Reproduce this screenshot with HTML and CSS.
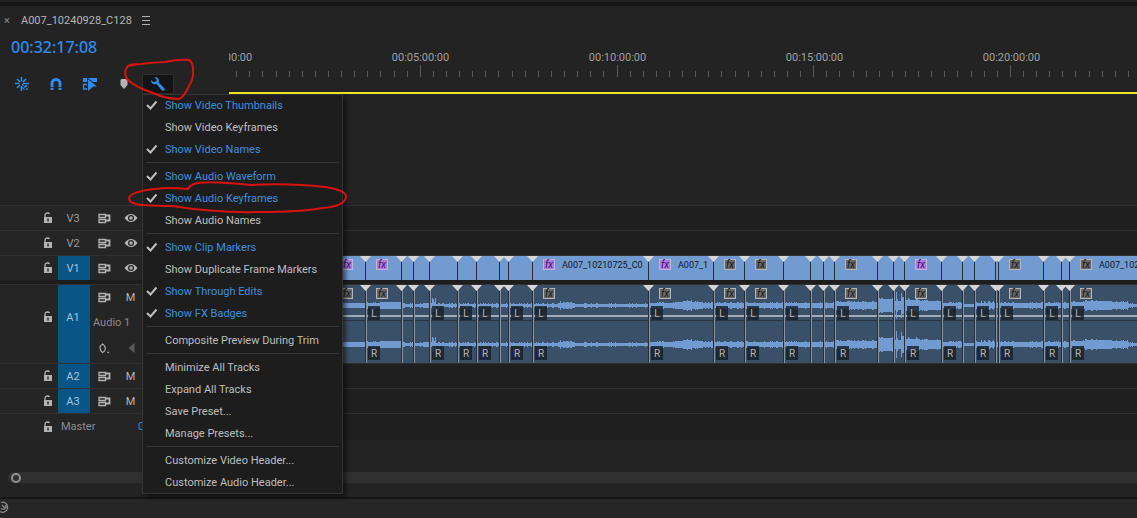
FILE: index.html
```html
<!DOCTYPE html>
<html lang="en">

<head>
    <meta charset="UTF-8">
    <meta name="viewport" content="width=device-width, initial-scale=1.0">
    <title>Timeline - A007_10240928_C128</title>
    <link rel="stylesheet" href="styles.css">
</head>

<body>
    <!-- Shared icons -->
    <svg class="sprite" aria-hidden="true">
        <symbol id="lock" viewBox="0 0 10 12">
            <path d="M2 5.500V3.500Q2 1 4.500 1Q6 1 6.500 2" fill="none" stroke="currentColor" stroke-width="1.300" />
            <path fill-rule="evenodd" fill="currentColor" d="M1 5H9V11H1ZM4.300 6.500V9.500H5.700V6.500Z" />
        </symbol>
        <symbol id="sync" viewBox="0 0 13 11">
            <path d="M1 1.500H7.500V4.500H1ZM1 6.500H7.500V9.500H1Z" fill="none" stroke="currentColor" stroke-width="1.300" />
            <path d="M7.500 2.500H11.500V7.500H7.500" fill="none" stroke="currentColor" stroke-width="1.800" />
        </symbol>
        <symbol id="eye" viewBox="0 0 14 10">
            <path fill-rule="evenodd" fill="currentColor" d="M.5 5Q3.500 1 7 1T13.500 5Q10.500 9 7 9T.5 5ZM7 2A3 3 0 1 0 7 8A3 3 0 1 0 7 2Z" />
            <circle cx="7" cy="5" r="1.700" fill="currentColor" />
        </symbol>
        <symbol id="check" viewBox="0 0 12 10">
            <path d="M1 5L4.500 8.500L10.500 1.500" fill="none" stroke="currentColor" stroke-width="2" />
        </symbol>
    </svg>

    <div class="top-edge"></div>
    <div class="tab-bar">
        <button class="close" aria-label="Close">×</button>
        <span class="tab-name">A007_10240928_C128</span>
        <button class="panel-menu" aria-label="Panel menu"><svg width="8" height="9"><path d="M0 .5H8M0 4.500H8M0 8.500H8" stroke="currentColor" /></svg></button>
    </div>

    <div class="timeline-head">
        <div class="controls">
            <div class="timecode">00:32:17:08</div>
            <div class="tools">
                <button class="tool" aria-label="Nest sequences">
                    <svg width="16" height="16" viewBox="0 0 16 16"><path d="M1 7.500H5.500M9 7.500H15M7.500 1V5.500M7.500 10V15M3 3L6 6M12 3L9 6M3 12L6 9" stroke="currentColor" stroke-width="1.600" /><path d="M8 8L14 14M8.500 11.500L11 14M11.500 9.500L14.500 11" stroke="currentColor" stroke-width="1.500" stroke-dasharray="2 1" /></svg>
                </button>
                <button class="tool" aria-label="Snap">
                    <svg width="14" height="14" viewBox="0 0 14 14"><path d="M3 13V6.500A4 4 0 0 1 11 6.500V13" fill="none" stroke="currentColor" stroke-width="3" /><path d="M1 10.500H5M9 10.500H13" stroke="#232323" stroke-width=".8" /></svg>
                </button>
                <button class="tool" aria-label="Linked selection">
                    <svg width="16" height="16" viewBox="0 0 16 16"><path fill="currentColor" d="M1 2H5V6H1ZM6 2H15V6H11L6 2ZM6 3L15 10.500H11.500L6 15Z" /><path d="M5 8.500H1.500V13H5" fill="none" stroke="currentColor" stroke-width="1.300" /></svg>
                </button>
                <button class="tool marker" aria-label="Add marker">
                    <svg width="8" height="10" viewBox="0 0 8 10"><path fill="currentColor" d="M1.500 0H6.500L7.500 1V6L4 10L.5 6V1Z" /></svg>
                </button>
                <div class="settings">
                    <button class="wrench" aria-label="Timeline display settings" aria-expanded="true">
                        <svg width="16" height="16" viewBox="0 0 16 16"><path fill="currentColor" d="M4.300 1L6.500 3.200V5L5 6L3 5.800L1 4Q.8 7.500 4 8.300Q5.500 8.500 6.500 8L12 14.500Q14 15.300 14.800 13.800Q15 13 14 12L8.800 6.500Q9.500 4 7.800 2Q6 .6 4.300 1Z" /></svg>
                    </button>
                    <div class="menu" role="menu">
                        <button class="item on" role="menuitemcheckbox" aria-checked="true"><svg class="tick"><use href="#check" /></svg>Show Video Thumbnails</button>
                        <button class="item" role="menuitemcheckbox" aria-checked="false">Show Video Keyframes</button>
                        <button class="item on" role="menuitemcheckbox" aria-checked="true"><svg class="tick"><use href="#check" /></svg>Show Video Names</button>
                        <hr>
                        <button class="item on" role="menuitemcheckbox" aria-checked="true"><svg class="tick"><use href="#check" /></svg>Show Audio Waveform</button>
                        <button class="item on" role="menuitemcheckbox" aria-checked="true"><svg class="tick"><use href="#check" /></svg>Show Audio Keyframes</button>
                        <button class="item" role="menuitemcheckbox" aria-checked="false">Show Audio Names</button>
                        <hr>
                        <button class="item on" role="menuitemcheckbox" aria-checked="true"><svg class="tick"><use href="#check" /></svg>Show Clip Markers</button>
                        <button class="item" role="menuitemcheckbox" aria-checked="false">Show Duplicate Frame Markers</button>
                        <button class="item on" role="menuitemcheckbox" aria-checked="true"><svg class="tick"><use href="#check" /></svg>Show Through Edits</button>
                        <button class="item on" role="menuitemcheckbox" aria-checked="true"><svg class="tick"><use href="#check" /></svg>Show FX Badges</button>
                        <hr>
                        <button class="item" role="menuitem">Composite Preview During Trim</button>
                        <hr>
                        <button class="item" role="menuitem">Minimize All Tracks</button>
                        <button class="item" role="menuitem">Expand All Tracks</button>
                        <button class="item" role="menuitem">Save Preset...</button>
                        <button class="item" role="menuitem">Manage Presets...</button>
                        <hr>
                        <button class="item" role="menuitem">Customize Video Header...</button>
                        <button class="item" role="menuitem">Customize Audio Header...</button>
                    </div>
                </div>
            </div>
        </div>
        <div class="ruler">
            <div class="ruler-labels">
                <span>00:00:00:00</span>
                <span>00:05:00:00</span>
                <span>00:10:00:00</span>
                <span>00:15:00:00</span>
                <span>00:20:00:00</span>
            </div>
            <svg class="ticks"><path id="minor" /><path id="major" /></svg>
            <div class="work-area"></div>
        </div>
    </div>

    <div class="tracks">
        <div class="track">
            <div class="head">
                <button class="lock" aria-label="Lock V3"><svg><use href="#lock" /></svg></button>
                <button class="target">V3</button>
                <button class="sync" aria-label="Sync lock V3"><svg><use href="#sync" /></svg></button>
                <button class="output" aria-label="Toggle V3 output"><svg><use href="#eye" /></svg></button>
            </div>
            <div class="lane"></div>
        </div>
        <div class="track">
            <div class="head">
                <button class="lock" aria-label="Lock V2"><svg><use href="#lock" /></svg></button>
                <button class="target">V2</button>
                <button class="sync" aria-label="Sync lock V2"><svg><use href="#sync" /></svg></button>
                <button class="output" aria-label="Toggle V2 output"><svg><use href="#eye" /></svg></button>
            </div>
            <div class="lane"></div>
        </div>
        <div class="track">
            <div class="head">
                <button class="lock" aria-label="Lock V1"><svg><use href="#lock" /></svg></button>
                <button class="target active">V1</button>
                <button class="sync" aria-label="Sync lock V1"><svg><use href="#sync" /></svg></button>
                <button class="output" aria-label="Toggle V1 output"><svg><use href="#eye" /></svg></button>
            </div>
            <div class="lane"><div class="clips video" id="video-clips"></div></div>
        </div>
        <div class="divider"></div>
        <div class="track tall">
            <div class="head">
                <button class="lock" aria-label="Lock A1"><svg><use href="#lock" /></svg></button>
                <button class="target active">A1</button>
                <div class="track-options">
                    <button class="sync" aria-label="Sync lock A1"><svg><use href="#sync" /></svg></button>
                    <button class="output">M</button>
                    <span class="track-name">Audio 1</span>
                    <button class="sync" aria-label="Show keyframes"><svg viewBox="0 0 13 12"><path d="M4.500 1Q1.500 3 1.500 5.500T4.500 10.500Q7.500 8.500 7.500 6T4.500 1Z" fill="none" stroke="currentColor" stroke-width="1.200" /><path fill="currentColor" d="M9 9.500H12L10.500 11.500Z" /></svg></button>
                    <button class="output prev" aria-label="Previous keyframe"><svg viewBox="0 0 14 10"><path fill="currentColor" d="M10.500 0V10L4.500 5Z" /></svg></button>
                </div>
            </div>
            <div class="lane">
                <div class="clips audio" id="audio-clips"><svg class="wave"><path id="wave" /></svg></div>
            </div>
        </div>
        <div class="track">
            <div class="head">
                <button class="lock" aria-label="Lock A2"><svg><use href="#lock" /></svg></button>
                <button class="target active">A2</button>
                <button class="sync" aria-label="Sync lock A2"><svg><use href="#sync" /></svg></button>
                <button class="output">M</button>
            </div>
            <div class="lane"></div>
        </div>
        <div class="track">
            <div class="head">
                <button class="lock" aria-label="Lock A3"><svg><use href="#lock" /></svg></button>
                <button class="target active">A3</button>
                <button class="sync" aria-label="Sync lock A3"><svg><use href="#sync" /></svg></button>
                <button class="output">M</button>
            </div>
            <div class="lane"></div>
        </div>
        <div class="track last">
            <div class="head">
                <button class="lock" aria-label="Lock Master"><svg><use href="#lock" /></svg></button>
                <span class="master">Master</span>
                <span class="level">0.0</span>
            </div>
            <div class="lane"></div>
        </div>
    </div>

    <div class="scrollbar"><span class="handle"></span></div>
    <div class="status">
        <svg width="10" height="12" viewBox="0 0 10 12"><path d="M1 1.500A5 5 0 1 1 0 10.500M2 4L5 7M5.500 4A2.500 2.500 0 1 1 1 7" fill="none" stroke="currentColor" stroke-width="1.200" /></svg>
    </div>

    <!-- Red pen marks -->
    <svg class="marks" width="360" height="220" viewBox="0 0 360 220" aria-hidden="true">
        <path d="M128 66Q143 63 165 62Q179 59 189 60Q193 62 193 70Q194 78 189 86Q184 97 179 99Q166 99 153 93Q135 87 127 79Q123 72 128 66Q131 64 137 64" />
        <path d="M187 189Q170 187 154 189Q130 192 129 198Q129 204 142 205Q160 206 172 206Q215 213 260 212Q300 212 323 208Q346 206 346 196Q345 190 325 187Q290 183 250 185Q205 180 194 184Q189 186 187 190" />
    </svg>

    <script src="timeline.js"></script>
</body>

</html>
```
FILE: styles.css
```css
* {
    box-sizing: border-box;
}

body {
    margin: 0;
    min-height: 100vh;
    display: flex;
    flex-direction: column;
    position: relative;
    overflow-x: hidden;
    background: #232323;
    color: #b4b4b4;
    font-family: Roboto, "Noto Sans", sans-serif;
    font-size: 11px;
}

button {
    margin: 0;
    padding: 0;
    border: 0;
    background: none;
    color: inherit;
    font: inherit;
}

.sprite {
    position: absolute;
    width: 0;
    height: 0;
}

.top-edge {
    height: 6px;
    border-top: 2px solid #232323;
    background: #151515;
}

/* Tab and timecode */
.tab-bar {
    display: flex;
    align-items: center;
    gap: 10px;
    height: 28px;
    padding-left: 3px;
}

.close {
    width: 8px;
    color: #8c8c8c;
}

.panel-menu {
    display: flex;
}

.timeline-head {
    display: grid;
    grid-template-columns: 229px 1fr;
    height: 60px;
}

.timecode {
    padding-left: 11px;
    line-height: 26px;
    font-family: "Noto Sans", sans-serif;
    font-size: 16px;
    font-weight: 500;
    color: #2d8ceb;
}

.tools {
    display: flex;
    align-items: flex-end;
    height: 34px;
    padding-left: 5px;
    color: #2d8ceb;
}

.tool,
.wrench {
    display: flex;
    align-items: center;
    justify-content: center;
    width: 34px;
    height: 20px;
}

.marker {
    color: #b4b4b4;
}

.settings {
    position: relative;
}

.wrench {
    margin-left: 1px;
    width: 32px;
    border: 1px solid #303030;
    border-radius: 2px;
    background: #131313;
}

/* Display settings menu */
.menu {
    position: absolute;
    z-index: 5;
    top: 100%;
    left: 1px;
    width: 201px;
    border: 1px solid #353535;
    border-top: 0;
    background: #1d1d1d;
    box-shadow: inset 0 1px #353535, 3px 3px 4px rgba(0, 0, 0, 0.5);
}

.item {
    display: block;
    position: relative;
    width: 100%;
    height: 22px;
    padding: 2px 0 0 22px;
    line-height: 20px;
    text-align: left;
    white-space: nowrap;
    color: #bebebe;
}

.item.on {
    color: #3d8fdf;
}

.tick {
    position: absolute;
    left: 3px;
    top: 6px;
    width: 12px;
    height: 10px;
    color: #bebebe;
}

.menu hr {
    height: 1px;
    margin: 2px 3px;
    border: 0;
    background: #353535;
}

/* Ruler */
.ruler {
    overflow: hidden;
    padding-top: 15px;
}

.ruler-labels {
    display: flex;
    height: 16px;
    margin-left: -104px;
}

.ruler-labels span {
    flex: none;
    width: 197px;
    line-height: 18px;
    text-align: center;
    color: #a0a0a0;
}

.ticks {
    display: block;
    width: 100%;
    height: 12px;
}

.ticks path {
    stroke: #5a5a5a;
}

.work-area {
    height: 2px;
    margin-top: 15px;
    background: #efe52a;
}

/* Tracks */
.tracks {
    padding-top: 111px;
}

.track {
    display: grid;
    grid-template-columns: 229px 1fr;
    height: 25px;
    border-top: 1px solid #303030;
}

.track.tall {
    height: 79px;
}

.track.last {
    height: 26px;
    border-bottom: 1px solid #303030;
}

.divider {
    height: 4px;
    background: #1d1d1d;
}

.head {
    display: flex;
    padding-left: 38px;
    background: #252525;
}

.lane {
    overflow: hidden;
    background: #1f1f1f;
}

.lock,
.sync,
.output {
    display: flex;
    align-items: center;
    justify-content: center;
}

.lock {
    width: 20px;
}

.lock svg {
    width: 10px;
    height: 12px;
}

.target {
    width: 32px;
    padding-right: 2px;
    color: #9a9a9a;
}

.target.active {
    background: #075687;
    color: #a9c3d8;
}

.tall .lock,
.tall .target {
    padding-bottom: 14px;
}

.sync {
    width: 28px;
}

.sync svg {
    width: 13px;
    height: 11px;
}

.output {
    width: 25px;
}

.output svg {
    width: 14px;
    height: 10px;
}

.track-options {
    display: grid;
    grid-template: 25px 25px 26px / 28px 25px;
}

.track-name {
    grid-column: 1 / 3;
    padding-left: 3px;
    line-height: 25px;
    color: #8c8c8c;
    white-space: nowrap;
}

.prev {
    color: #5a5a5a;
}

.master {
    width: 80px;
    padding-left: 3px;
    line-height: 26px;
    color: #8c8c8c;
}

.level {
    line-height: 26px;
    color: #2d8ceb;
}

/* Clips */
.clips {
    display: flex;
    position: relative;
    height: 100%;
    margin-left: 101px;
}

.video {
    background: #729bd1;
}

.audio {
    background: #3a5069;
}

.wave {
    position: absolute;
    width: 100%;
    height: 100%;
}

.wave path {
    fill: #729bd1;
}

.clip {
    flex: none;
    display: flex;
    position: relative;
    align-items: flex-start;
    padding-top: 3px;
    border-left: 1px solid #25303c;
    color: #10161f;
    white-space: nowrap;
}

.clip:last-child {
    flex: 1;
}

/* Through edit mark on the cut */
.clip::before {
    content: "";
    position: absolute;
    z-index: 1;
    top: 0;
    left: -6px;
    width: 11px;
    height: 6px;
    background: #d6d6d6;
    clip-path: polygon(0 0, 100% 0, 50% 100%);
}

.clip .name {
    margin-left: 7px;
    font-size: 9px;
    line-height: 12px;
}

.fx {
    flex: none;
    width: 12px;
    height: 11px;
    margin-left: 10px;
    border: 1px solid #b5b5b5;
    background: #686868;
    color: #161616;
    font-size: 10px;
    font-style: italic;
    line-height: 9px;
    text-align: center;
}

.fx.purple {
    border-color: #c2b2dc;
    background: #ae7ae0;
    color: #351b52;
}

.audio .clip {
    box-shadow: inset 1px 0 #8994a0;
}

/* Volume line */
.audio::before {
    content: "";
    position: absolute;
    top: 30px;
    left: 0;
    width: 100%;
    height: 3px;
    border-top: 2px solid #a2abb5;
    border-bottom: 1px solid #2a3644;
}

.channel {
    position: absolute;
    left: 2px;
    top: 21px;
    width: 12px;
    height: 14px;
    background: rgba(22, 30, 40, 0.8);
    color: #b4b4b4;
    font-size: 10px;
    line-height: 15px;
    text-align: center;
}

.channel.right {
    top: 61px;
}

/* Bottom */
.scrollbar {
    display: flex;
    align-items: center;
    height: 11px;
    margin: 33px 0 14px 8px;
    padding-left: 3px;
    border-radius: 6px 0 0 6px;
    background: #303030;
}

.handle {
    width: 10px;
    height: 10px;
    border: 2px solid #929292;
    border-radius: 50%;
}

.status {
    flex: 1;
    padding-top: 2px;
    border-top: 2px solid #151515;
    background: #262626;
    color: #8c8c8c;
}

.marks {
    position: absolute;
    z-index: 10;
    top: 0;
    left: 0;
    pointer-events: none;
}

.marks path {
    fill: none;
    stroke: #d8130f;
    stroke-width: 2;
    stroke-linejoin: round;
}
```
FILE: timeline.js
```js
// Clips on V1 and A1: width in pixels, fx badge, name, channel letters
var clips = [
    { width: 35, fx: "purple" },
    { width: 36, fx: "purple", channels: true },
    { width: 12 },
    { width: 16 },
    { width: 28, channels: true },
    { width: 19, channels: true },
    { width: 23, channels: true },
    { width: 9 },
    { width: 24, channels: true },
    { width: 116, fx: "purple", name: "A007_10210725_C0", channels: true },
    { width: 65, fx: "purple", name: "A007_1", channels: true },
    { width: 31, fx: "gray", channels: true },
    { width: 39, fx: "gray", channels: true },
    { width: 27, channels: true },
    { width: 13 },
    { width: 11 },
    { width: 43, fx: "gray", channels: true },
    { width: 16 },
    { width: 11 },
    { width: 37, fx: "purple", channels: true },
    { width: 21, channels: true },
    { width: 12 },
    { width: 21, channels: true },
    { width: 3 },
    { width: 45, fx: "gray", channels: true },
    { width: 18, channels: true },
    { width: 8 },
    { width: 67, fx: "gray", name: "A007_102", channels: true }
];

// Loudness along the track: [x, half height, roughness]
var levels = [
    [0, 2, 0], [35, 2, 1], [50, 3, 0], [71, 1, 1], [101, 2, 6], [106, 1, 1],
    [200, 1, 1], [229, 2, 2], [245, 1, 1], [318, 2, 1], [345, 3, 1], [353, 4, 1],
    [362, 3, 1], [372, 2, 1], [383, 2, 1], [504, 3, 1], [547, 6, 1], [562, 4, 9],
    [574, 5, 2], [590, 4, 1], [611, 2, 1], [632, 1, 0], [644, 2, 2], [668, 2, 1],
    [739, 3, 1], [755, 4, 1], [780, 3, 1], [798, 1, 1], [830, 1, 0]
];

function addSpan(parent, className, text) {
    var span = document.createElement("span");
    span.className = className;
    span.textContent = text;
    parent.appendChild(span);
}

function buildClips(track, isAudio) {
    clips.forEach(function (clip, i) {
        var el = document.createElement("div");
        el.className = "clip";
        if (i < clips.length - 1) {
            el.style.width = clip.width + "px";
        }
        if (clip.fx) {
            addSpan(el, isAudio ? "fx" : "fx " + clip.fx, "fx");
        }
        if (!isAudio && clip.name) {
            addSpan(el, "name", clip.name);
        }
        if (isAudio && clip.channels) {
            addSpan(el, "channel", "L");
            addSpan(el, "channel right", "R");
        }
        track.appendChild(el);
    });
}

function drawWave() {
    var d = "";
    var level = 0;
    for (var x = 0; x < 3000; x++) {
        while (level < levels.length - 1 && levels[level + 1][0] <= x) {
            level++;
        }
        var noise = Math.abs(Math.sin(x * 12.9898) * 43758.5453) % 1;
        var h = levels[level][1] + Math.floor(noise * noise * (levels[level][2] + 1));
        [20, 59].forEach(function (mid) {
            d += "M" + x + " " + (mid - h) + "h1v" + (h * 2 + 1) + "h-1z";
        });
    }
    document.getElementById("wave").setAttribute("d", d);
}

// One tick per 20 seconds, fifteen to each labelled one
function drawTicks() {
    var minor = "";
    var major = "";
    for (var i = 1; i < 250; i++) {
        var x = Math.floor(i * 196.7 / 15 - 5.4) + 0.5;
        if (i % 15 === 0) {
            major += "M" + x + " 0V12";
        } else {
            minor += "M" + x + " 6V12";
        }
    }
    document.getElementById("minor").setAttribute("d", minor);
    document.getElementById("major").setAttribute("d", major);
}

buildClips(document.getElementById("video-clips"), false);
buildClips(document.getElementById("audio-clips"), true);
drawWave();
drawTicks();
```
